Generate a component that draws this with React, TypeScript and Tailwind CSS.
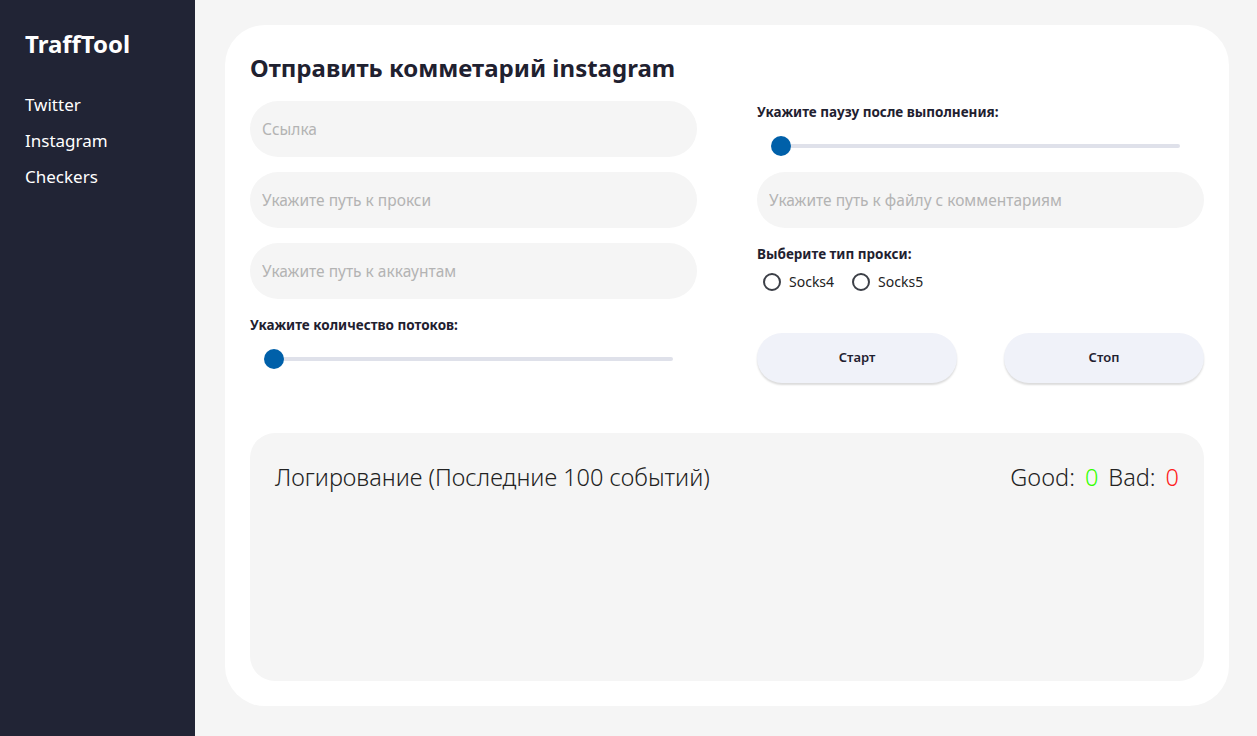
import React from 'react';

const font = { fontFamily: '"Noto Sans", "Open Sans", sans-serif' };

const Field: React.FC<{ placeholder: string }> = ({ placeholder }) => (
  <input
    placeholder={placeholder}
    className="h-[56px] w-full rounded-full bg-[#f5f5f5] px-[12px] text-[15.5px] text-[#333] outline-none placeholder:text-[#b3b3b3]"
  />
);

const Slider: React.FC = () => (
  <div className="relative flex h-[22px] items-center px-[24px]">
    <div className="h-[4px] w-full rounded-full bg-[#dfe1ea]" />
    <div className="absolute left-[24px] top-0 h-[20px] w-[20px] -translate-x-1/2 translate-y-[1px] rounded-full bg-[#0060a9]" />
  </div>
);

const Radio: React.FC<{ label: string }> = ({ label }) => (
  <label className="flex items-center gap-[8px] text-[14px] text-[#222]">
    <span className="h-[18px] w-[18px] rounded-full border-2 border-[#3c3f47]" />
    {label}
  </label>
);

export default function App() {
  return (
    <div className="flex h-[736px] w-full bg-[#f5f5f5]" style={font}>
      <aside className="flex w-[195px] shrink-0 flex-col bg-[#212435] px-[25px] pt-[28px] text-white">
        <div className="text-[24px] font-bold leading-[32px]">TraffTool</div>
        <nav className="mt-[32px] flex flex-col gap-[11px] text-[17px]">
          <a className="leading-[25px]">Twitter</a>
          <a className="leading-[25px]">Instagram</a>
          <a className="leading-[25px]">Checkers</a>
        </nav>
      </aside>
      <main className="flex-1 py-[25px] pl-[30px] pr-[28px]">
        <div className="flex h-[681px] flex-col rounded-[40px] bg-white px-[25px] pt-[27px]">
          <h1 className="text-[24px] font-bold leading-[32px] text-[#1f2130]">Отправить комметарий instagram</h1>
          <div className="mt-[17px] grid grid-cols-2 gap-x-[60px]">
            <div className="flex flex-col">
              <div className="flex flex-col gap-[15px]">
                <Field placeholder="Ссылка" />
                <Field placeholder="Укажите путь к прокси" />
                <Field placeholder="Укажите путь к аккаунтам" />
              </div>
              <div className="mt-[17px] text-[13.5px] font-bold leading-[18px] text-[#1f2130]">
                Укажите количество потоков:
              </div>
              <div className="mt-[14px]">
                <Slider />
              </div>
            </div>
            <div className="flex flex-col">
              <div className="mt-[2px] text-[13.5px] font-bold leading-[18px] text-[#1f2130]">
                Укажите паузу после выполнения:
              </div>
              <div className="mt-[14px]">
                <Slider />
              </div>
              <div className="mt-[15px]">
                <Field placeholder="Укажите путь к файлу с комментариям" />
              </div>
              <div className="mt-[17px] text-[13.5px] font-bold leading-[18px] text-[#1f2130]">
                Выберите тип прокси:
              </div>
              <div className="mt-[8px] flex gap-[18px] pl-[6px]">
                <Radio label="Socks4" />
                <Radio label="Socks5" />
              </div>
              <div className="mt-[41px] flex justify-between">
                <button className="h-[50px] w-[200px] rounded-full bg-[#f0f2f9] text-[13px] font-semibold text-[#1f2130] shadow-[0_2px_2px_rgba(0,0,0,0.14)]">
                  Старт
                </button>
                <button className="h-[50px] w-[200px] rounded-full bg-[#f0f2f9] text-[13px] font-semibold text-[#1f2130] shadow-[0_2px_2px_rgba(0,0,0,0.14)]">
                  Стоп
                </button>
              </div>
            </div>
          </div>
          <div className="mt-[50px] h-[248px] rounded-[25px] bg-[#f5f5f5] px-[25px] pt-[27px]">
            <div className="flex items-center justify-between text-[23.5px] font-light leading-[34px] text-[#222]">
              <span>Логирование (Последние 100 событий)</span>
              <span>
                Good:<span className="ml-[10px] text-[#33ff00]">0</span>
                <span className="ml-[10px]">Bad:</span>
                <span className="ml-[10px] text-[#ff2020]">0</span>
              </span>
            </div>
          </div>
        </div>
      </main>
    </div>
  );
}
